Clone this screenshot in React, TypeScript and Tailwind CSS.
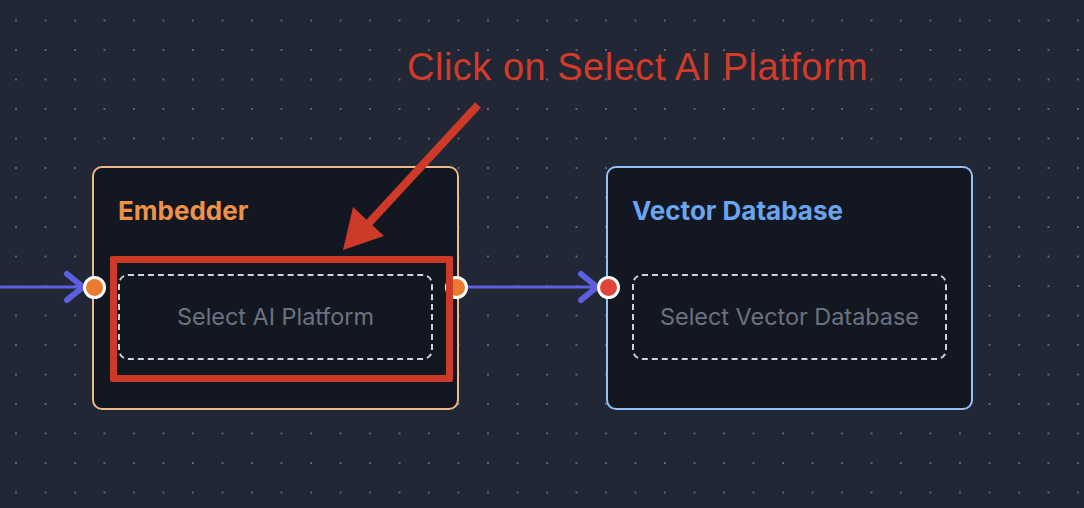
import React from "react";

type NodeProps = {
    title: string;
    placeholder: string;
    borderClass: string;
    titleClass: string;
    inColor: string;
    outColor?: string;
    highlight?: boolean;
};

function Handle({ fill, side }: { fill: string; side: "left" | "right" }) {
    return (
        <div
            className={`absolute top-[108px] h-[23px] w-[23px] rounded-full border-[3px] border-white ${fill} ${
                side === "left" ? "left-[-11px]" : "right-[-11px]"
            }`}
        />
    );
}

function FlowNode({ title, placeholder, borderClass, titleClass, inColor, outColor, highlight }: NodeProps) {
    return (
        <div
            className={`relative flex h-[244px] w-[367px] shrink-0 flex-col rounded-[10px] border-2 bg-[#131722] px-[24px] pt-[26px] ${borderClass}`}
        >
            <div className={`text-[26px] font-bold leading-[34px] ${titleClass}`}>{title}</div>
            <div className="relative mt-[46px]">
                <div className="flex h-[86px] items-center justify-center rounded-[10px] border-2 border-dashed border-[#cfd3da] text-[23.4px] text-[#6b7280]">
                    {placeholder}
                </div>
                {/* red highlight from the annotation, drawn over the handle */}
                {highlight && (
                    <div className="absolute bottom-[-22px] left-[-8px] right-[-20px] top-[-18px] z-10 rounded-[2px] border-[7px] border-[#cd3a27]" />
                )}
            </div>
            <Handle fill={inColor} side="left" />
            {outColor && <Handle fill={outColor} side="right" />}
        </div>
    );
}

function Edge({ width, from }: { width: number; from: number }) {
    const tip = width - 9;
    return (
        <svg className="shrink-0" width={width} height="244" viewBox={`0 0 ${width} 244`}>
            <g stroke="#5b5fe0" strokeLinecap="round" strokeLinejoin="round" fill="none">
                <line x1={from} y1="121" x2={tip} y2="121" strokeWidth="3" />
                <polyline points={`${tip - 16},108 ${tip},121 ${tip - 16},134`} strokeWidth="6" />
            </g>
        </svg>
    );
}

export default function App() {
    return (
        <div
            className="relative h-[508px] w-[1084px] overflow-hidden bg-[#212735] bg-[radial-gradient(circle,#5d6473_0.9px,transparent_1.4px)] bg-[length:29.5px_29.5px] bg-[position:1.25px_5.75px] pt-[166px]"
            style={{ fontFamily: "Inter, 'Liberation Sans', sans-serif" }}
        >
            <div className="flex items-start">
                <Edge width={92} from={-4} />
                <FlowNode
                    title="Embedder"
                    placeholder="Select AI Platform"
                    borderClass="border-[#efb983]"
                    titleClass="text-[#ee9248]"
                    inColor="bg-[#ea7a30]"
                    outColor="bg-[#ea7a30]"
                    highlight
                />
                <Edge width={147} from={8} />
                <FlowNode
                    title="Vector Database"
                    placeholder="Select Vector Database"
                    borderClass="border-[#93c0f5]"
                    titleClass="text-[#6aa5ee]"
                    inColor="bg-[#e0453c]"
                />
            </div>

            {/* annotation */}
            <div
                className="absolute left-[407px] top-[42px] text-[38px] leading-[50px] tracking-[0.5px] text-[#d23b29]"
                style={{ fontFamily: "'Liberation Sans', Arial, sans-serif" }}
            >
                Click on Select AI Platform
            </div>
            <svg className="pointer-events-none absolute left-0 top-0" width="1084" height="508" viewBox="0 0 1084 508">
                <line x1="478" y1="105" x2="368" y2="224" stroke="#cd3a27" strokeWidth="8" />
                <polygon points="343,250 353,207 384,236" fill="#cd3a27" />
            </svg>
        </div>
    );
}
